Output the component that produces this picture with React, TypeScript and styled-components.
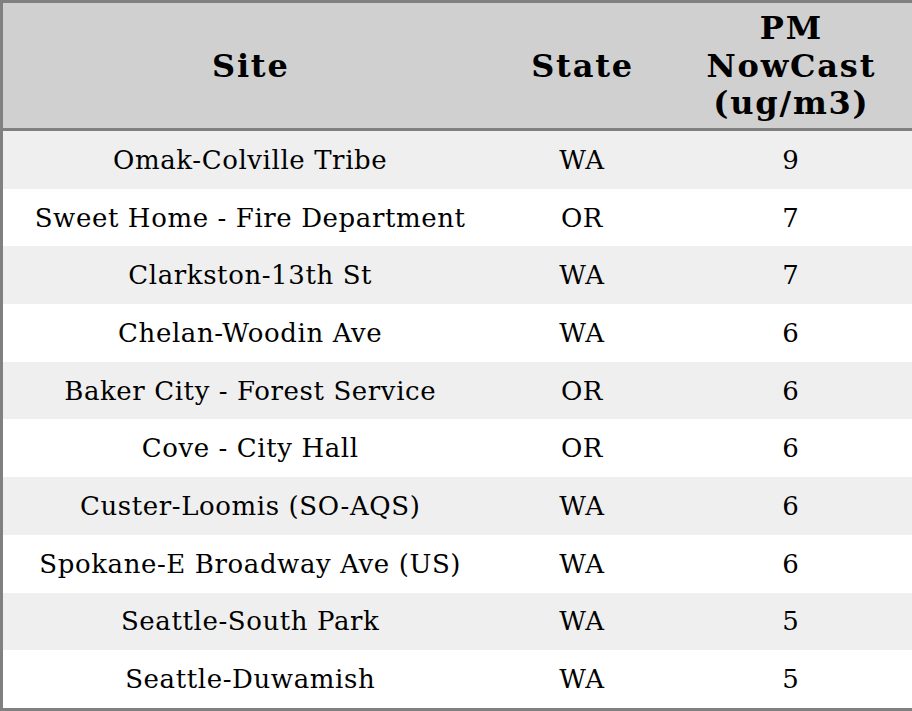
import React from "react";
import styled, { createGlobalStyle } from "styled-components";

const Global = createGlobalStyle`
  html, body { margin: 0; padding: 0; background: #ffffff; }
  body { font-family: "DejaVu Serif", serif; }
`;

const Table = styled.table`
  width: 912px;
  border-collapse: collapse;
  border: 3px solid #808080;
  font-family: "DejaVu Serif", serif;
  color: #000;
  table-layout: fixed;
`;

const HeadRow = styled.tr`
  height: 128px;
  background: #d0d0d0;
  border-bottom: 3px solid #808080;
`;

const Th = styled.th<{ $w: number }>`
  width: ${(p) => p.$w}px;
  padding: 2px 0 0 1.8px;
  font-size: 32px;
  letter-spacing: 1.8px;
  font-weight: bold;
  text-align: center;
  vertical-align: middle;
  line-height: 37.5px;
`;

const Row = styled.tr<{ $shade: boolean }>`
  background: ${(p) => (p.$shade ? "#efefef" : "#ffffff")};
`;

const Td = styled.td`
  padding: 0 0 0 0.6px;
  font-size: 26px;
  letter-spacing: 0.6px;
  text-align: center;
  vertical-align: middle;
  height: 57.7px;
`;

const data: [string, string, number][] = [
  ["Omak-Colville Tribe", "WA", 9],
  ["Sweet Home - Fire Department", "OR", 7],
  ["Clarkston-13th St", "WA", 7],
  ["Chelan-Woodin Ave", "WA", 6],
  ["Baker City - Forest Service", "OR", 6],
  ["Cove - City Hall", "OR", 6],
  ["Custer-Loomis (SO-AQS)", "WA", 6],
  ["Spokane-E Broadway Ave (US)", "WA", 6],
  ["Seattle-South Park", "WA", 5],
  ["Seattle-Duwamish", "WA", 5],
];

export default function App() {
  return (
    <>
      <Global />
      <Table>
        <thead>
          <HeadRow>
            <Th $w={492}>Site</Th>
            <Th $w={168}>State</Th>
            <Th $w={246}>
              PM
              <br />
              NowCast
              <br />
              (ug/m3)
            </Th>
          </HeadRow>
        </thead>
        <tbody>
          {data.map(([site, st, v], i) => (
            <Row key={site} $shade={i % 2 === 0}>
              <Td>{site}</Td>
              <Td>{st}</Td>
              <Td>{v}</Td>
            </Row>
          ))}
        </tbody>
      </Table>
    </>
  );
}
